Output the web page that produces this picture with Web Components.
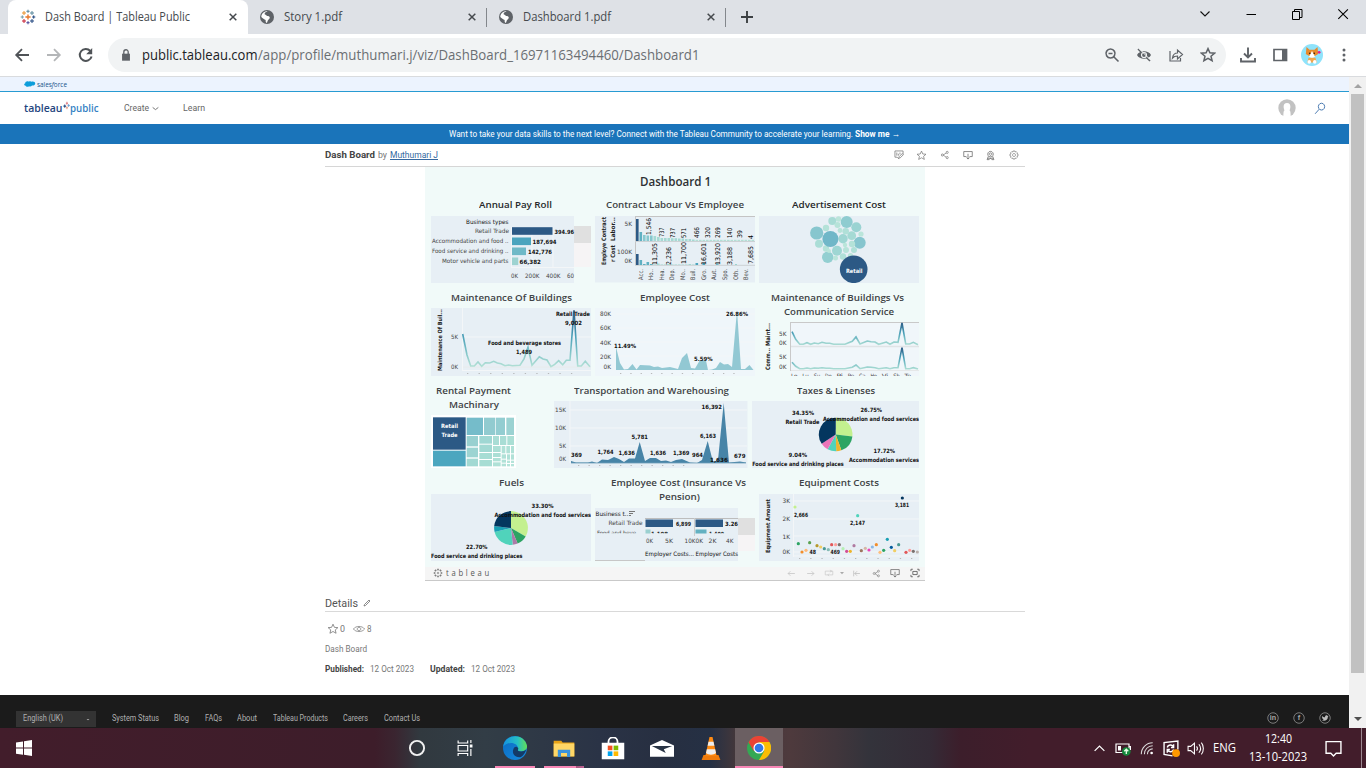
<!DOCTYPE html>
<html lang="en">
<head>
<meta charset="utf-8">
<title>Dash Board | Tableau Public</title>
<style>
html,body{margin:0;width:1366px;height:768px;overflow:hidden;background:#fff;font-family:"Open Sans","Noto Sans",sans-serif}
</style>
</head>
<body>
<desktop-screen></desktop-screen>
<script>
/* Text that is set to an exact width, whatever the font's own advance. */
class FitText extends HTMLElement{
  connectedCallback(){
    if(this.shadowRoot)return;
    const r=this.attachShadow({mode:'open'}),w=this.getAttribute('w');
    r.innerHTML=`<style>:host{display:inline-block;flex:none;width:${w}px;white-space:pre}span{display:inline-block;transform-origin:0 50%}</style><span><slot></slot></span>`;
    const s=r.querySelector('span'),n=s.offsetWidth;
    if(n)s.style.transform=`scaleX(${w/s.getBoundingClientRect().width})`;
  }
}
customElements.define('fit-text',FitText);

const S=(d,w=1.5,c='#5f6368')=>`<path d="${d}" fill="none" stroke="${c}" stroke-width="${w}"/>`;
const F=(d,c='#5f6368')=>`<path d="${d}" fill="${c}"/>`;
const star='M8 1.6l1.9 4.2 4.6.4-3.5 3 1.1 4.5L8 11.3l-4.1 2.4L5 9.2l-3.5-3 4.6-.4z';
const plus=(x,y,r,c,w=1)=>S(`M${x-r} ${y}h${2*r}M${x} ${y-r}v${2*r}`,w,c);
const share='M10.5 4.5L5 8l5.5 4';
const ICONS={
 tableau:plus(8,8,2.6,'#e8762b',1.4)+plus(8,2.3,1.6,'#59879b')+plus(8,13.7,1.6,'#4b4a9b')+plus(2.3,8,1.6,'#7199a6')+plus(13.7,8,1.6,'#1f457e')+plus(4,4,2,'#e8912b')+plus(12,4,2,'#59879b')+plus(4,12,2,'#c72035')+plus(12,12,2,'#1f447e'),
 mark:plus(4,9,3,'#1f457e',2)+plus(9,4,2.5,'#e0777d',2)+plus(13,8,2.5,'#6d9fd0',2)+plus(9,12,2.5,'#e8a08a',2),
 globe:'<circle cx="8" cy="8" r="7" fill="#5f6368"/>'+F('M8.6 2.1c-1 1.3-3.1 1.1-3 2.800 0 .9 1.900.6 1.900 1.700 0 .9 2.600.2 3.100 1.300.5.9-.3 2.300-1.300 2.900-.9.7-.7 2.100-1.400 3.100C6.500 13.500 6.500 12 6.700 11c-1.600-.4-2.900-1.700-4.400-3C2.500 5 4.500 2.600 8.600 2.100z','#fff'),
 close:S('M4.200 4.200l7.600 7.600M11.800 4.200l-7.600 7.600',1.7,'#45494d'),
 plus:S('M8 2v12M2 8h12',1.9,'#3c4043'),
 caret:S('M3.500 5.500L8 10l4.500-4.500',1.100,'#111'),
 min:S('M3.500 8.500h9.500',1,'#000'),
 restore:S('M3.500 5.500h7v8h-7zM5.500 5.500v-2h7.500v8h-2.500',1,'#000'),
 xwin:S('M3.300 3.300l9.600 9.600M12.900 3.300l-9.600 9.600',1.100,'#000'),
 back:S('M15 8H2.500M8 2.200L2.200 8 8 13.800',1.800,'#4f5357'),
 fwd:S('M1 8h12.500M8 2.200L13.800 8 8 13.800',1.800,'#b4b6b8'),
 reload:S('M13.600 9.500A6 6 0 1 1 12.300 3.900',2,'#4f5357')+F('M14.200 1v6.200H8.200z','#4f5357'),
 lock:F('M3.500 6.500h9v8h-9z')+S('M5.500 7V4.500a2.500 2.500 0 0 1 5 0V7',1.500),
 zoom:S('M6.500 2a4.500 4.500 0 1 0 .01 0M10 10l4.500 4.500M4.500 6.500h4',1.600),
 eyeoff:S('M2 2l12 12',1.600)+F('M1 8c2.500-5 11.500-5 14 0-2.500 5-11.500 5-14 0z')+'<circle cx="8" cy="8" r="2.500" fill="none" stroke="#f1f3f4" stroke-width="1.200"/>'+S('M3 1.500l11 11',1,'#f1f3f4'),
 share:S('M2 4v10h10.500V11M4.500 11C5 7.500 7 6 9.500 6V3l5 4.500-5 4.500V9C7.500 9 5.800 9.500 4.500 11z',1.200),
 star:S(star,1.500),
 download:S('M8 0.500v10M4 6.500l4 4 4-4M1 11v3.500h14V11',1.900,'#5f6368'),
 panel:S('M2 2.500h12.500v11H2z',1.700)+F('M10 2h5v12h-5z'),
 dots:'<g fill="#5f6368"><circle cx="8" cy="3" r="1.500"/><circle cx="8" cy="8" r="1.500"/><circle cx="8" cy="13" r="1.500"/></g>',
 corgi:'<circle cx="8" cy="8" r="8" fill="#8fe3fb"/>'+F('M4 2.200l2.200 2h3.600l2.200-2 .5 5L8 10 3.500 7.200z','#e88a2c')+F('M8 5l2.200 4.200L8 10.500 5.800 9.200z','#fff')+F('M5.500 10h5l1 3.500h-7z','#f2a64d')+'<circle cx="6" cy="13" r="1.300" fill="#fff"/><circle cx="10" cy="13" r="1.300" fill="#fff"/><circle cx="6.400" cy="6.700" r=".5"/><circle cx="9.600" cy="6.700" r=".5"/><circle cx="13.200" cy="6" r="1" fill="#e91e8c"/>',
 cloud:F('M6.500 3.200C7.500 2 9.300 2.200 10 3.300c2.500-1.300 5 .500 5 3.200 0 2.600-2 4.200-4.300 3.800-.8 1.700-2.700 2.200-4 1.300-1.300 1.800-4 1.300-4.500-.7C-.500 10.500-.200 7 1.700 6.200 1.300 3 4.500 1.200 6.500 3.200z','#0d9dda'),
 avatar:'<circle cx="8" cy="8" r="7.700" fill="#c2c2c2"/>'+F('M8 3.500c3 0 3.500 3 2.600 5.500-.5 1.200-.2 1.800.4 2.200l.5 5.800h-7l.5-5.800c.6-.4.9-1 .4-2.200C4.500 6.500 5 3.500 8 3.500z','#fff'),
 search:S('M10 1.500a4.200 4.200 0 1 0 .01 0M7 8.800l-5.500 5.700',1.200,'#4173ad'),
 note:S('M14.500 7V1.500h-13v10H5l3 3M4.500 4v5M7 6v3M9.500 4v3M15 7.500l-5 5-2.500.7.700-2.500 5-5z',1.200,'#757575'),
 star2:S(star,1.050,'#757575'),
 sharenet:S(share,1,'#666')+'<g fill="#fff" stroke="#666"><circle cx="11.500" cy="3.800" r="1.700"/><circle cx="3.800" cy="8" r="1.700"/><circle cx="11.500" cy="12.200" r="1.700"/></g>',
 dl:S('M5.500 10.500H1.200V2.500h13.600v8h-4.300M8 6v8.500M5.500 12L8 14.500l2.500-2.500',1.200,'#666'),
 badge:S('M8 2a4 4 0 1 0 .01 0M8 4.200a1.800 1.800 0 1 0 .01 0M5 9l-2 5h3l2-2 2 2h3l-2-5M4 12h8',1.200,'#757575'),
 gear:S('M6.700 1.500h2.600l.5 1.700 1.800-.6 1.800 1.800-.6 1.800 1.700.5v2.600l-1.700.5.6 1.800-1.800 1.800-1.800-.6-.5 1.700H6.700l-.5-1.700-1.800.6-1.800-1.800.6-1.800-1.700-.5V6.700l1.700-.5-.6-1.800 1.800-1.800 1.800.6zM8 5.600a2.400 2.400 0 1 0 .01 0',1.100,'#757575'),
 spark:[[8,8],[8,2.500],[8,13.500],[2.500,8],[13.500,8],[4,4],[12,4],[4,12],[12,12]].map(([x,y])=>plus(x,y,1.800,'#6a6a6a',1)).join(''),
 left:S('M14 8H2M6 4L2 8l4 4',1.200,'#bdbdbd'),right:S('M2 8h12M10 4l4 4-4 4',1.200,'#bdbdbd'),
 loop:S('M6 11H2V5h10M10 3l2 2-2 2M10 5h4v6H6M8 9l-2 2 2 2',1,'#c4c4c4'),
 tri:F('M4 6h8l-4 4.500z','#aaa'),
 first:S('M3 3v10M14 8H5M9 4L5 8l4 4',1.200,'#b4b4b4'),
 full:S('M1.500 5V2h3M11.500 2h3v3M14.500 11v3h-3M4.500 14h-3v-3M4.500 5.500h7v5h-7z',1.300,'#555'),
 pencil:S('M2 14l1-3L12 2l2 2-9 9z',1.500,'#666'),
 eye:S('M.5 8C4 2.500 12 2.500 15.500 8 12 13.500 4 13.500.5 8zM8 5.500a2.500 2.500 0 1 0 .01 0',1.200,'#888'),
 chev:S('M1.500 5.500l6.500 5 6.500-5',2,'#666'),
 win:F('M0 2.400L7 1.400v6.200H0zM8 1.200L16 0v7.600H8zM0 8.500h7v6.200l-7-1zM8 8.500h8V16l-8-1.200z','#fff'),
 ring:'<circle cx="8" cy="8" r="6.300" fill="none" stroke="#f1f1f1" stroke-width="1.700"/>',
 task:S('M2 .5v2.500h9V.5M2 5.500h9v5.500H2zM2 16v-2.500h9V16M14 0v3M14 9v7',1.100,'#fff')+F('M13 4.500h2.500v3H13z','#fff'),
 edge:'<defs><linearGradient id="g1"><stop stop-color="#1692e0"/><stop offset=".6" stop-color="#26bfc4"/><stop offset="1" stop-color="#62df57"/></linearGradient><linearGradient id="g2" y2="1"><stop stop-color="#0b6ac0"/><stop offset="1" stop-color="#168be0"/></linearGradient></defs><circle cx="8" cy="8" r="8" fill="url(#g2)"/><path d="M.2 7C1-1.500 14-2.500 16 6.500c.3 3-2.500 4-5 3.700-1.400-.2-1.200-1-.8-1.700C10 4.500 4 3 .2 7z" fill="url(#g1)"/><path d="M10.200 8.500c-.4.700-.6 1.500.8 1.700 1.700.2 3.500-.1 4.500-1.400-.5 2-1.600 4-3.500 5.200-3.500.8-6.500-2-5-5.500.5-1.600 2.500-2 3.200 0z" fill="#143a67"/>',
 folder:F('M.5 2h5.500l1 1.500h8.500V14H.5z','#e8a317')+F('M.5 4.200h15V14H.5z','#ffd766')+F('M3.500 9h9v5.500h-2.300v-3H5.800v3H3.500z','#3b94dc'),
 store:F('M.5 4h15v11.500H.5z','#fff')+S('M5 5V3.200a3 3 0 0 1 6 0V5',1.200,'#fff')+F('M4.500 6h3.100v3.200H4.500z','#f25022')+F('M8.400 6h3.100v3.200H8.400z','#7fba00')+F('M4.500 10h3.100v3.200H4.500z','#00a4ef')+F('M8.400 10h3.100v3.200H8.400z','#ffb900'),
 mail:F('M0 6l8-4.500L16 6v9H0z','#fff')+F('M1.200 6.300h13.600L9.200 9l1.300 3z','#293445'),
 vlc:F('M2 12.500h12l1.500 3.500H.5z','#f07b0a')+F('M6.800 0h2.400l3.300 13H3.500z','#ff8b13')+F('M6 3.300h4l.7 2.700H5.300zM4.700 8.500h6.600l.7 2.700c-2 1.500-6 1.500-8 0z','#eee'),
 chrome:'<circle cx="8" cy="8" r="8" fill="#34a853"/>'+F('M1 4.200A8 8 0 0 1 15 4H8L4.500 10z','#ea4335')+F('M15 4H8l3.500 6L8 16A8 8 0 0 0 15 4z','#fbbc04')+'<circle cx="8" cy="8" r="3.700" fill="#fff"/><circle cx="8" cy="8" r="2.900" fill="#3378e8"/>',
 up:S('M2 11l6-6 6 6',1.500,'#fff'),
 batt:S('M1 4h13v8.500H1zM14 6.500h1.500V10',1.200,'#fff')+F('M3 6h3v4.500H3z','#fff')+'<circle cx="11.300" cy="11.500" r="4.300" fill="#15883c"/>'+S('M11.300 9v5M9.300 11.200l2-2 2 2',1.300,'#e8ffe8'),
 wifi:S('M1.500 15A13 13 0 0 1 14.500 2M5 15A9.500 9.500 0 0 1 14.500 5.500M8.500 15A6 6 0 0 1 14.500 9',1.200,'#ddd')+'<circle cx="13.300" cy="13.700" r="1.500" fill="#fff"/>',
 sync:S('M14 9V1L1 2.500v11L9 15M4 7c1-3 5-3 6 0M10 4v3H7.500M10 9c-1 3-5 2.500-6 0M4 12V9h2.500',1.300,'#fff')+'<circle cx="12.300" cy="12.300" r="3.700" fill="#ff9800"/>',
 vol:S('M1 6h2.500L7 3v10l-3.500-3H1zM9 6c1 1.200 1 2.800 0 4M11.200 4c2 2.500 2 5.500 0 8M13.500 2.500c2.500 3 2.500 8 0 11',1,'#fff'),
 action:S('M1 1.500h14v11H10.500L8 15l-2.500-2.500H1z',1.300,'#fff')
};
for(const [k,c] of [['li','in'],['fb','f']])ICONS[k]=`<circle cx="8" cy="8" r="7" fill="none" stroke="#999"/><text x="8" y="11.300" text-anchor="middle" font-family="Liberation Sans" font-weight="700" font-size="9.500" fill="#aaa">${c}</text>`;
ICONS.tw='<circle cx="8" cy="8" r="7" fill="none" stroke="#999"/>'+F('M4 5.200c1 1.200 2.500 1.700 4 1.800 0-3 3-3 3.600-1.700l1.200-.3-.9 1.300c0 5-5 6.300-8.200 4.500 1 0 2-.2 2.500-.8C4.500 9.500 4 7.500 4 5.200z','#bbb');

class UiIcon extends HTMLElement{
  connectedCallback(){
    if(this.shadowRoot)return;
    const s=this.getAttribute('s')||16,h=this.getAttribute('h')||s,c=this.getAttribute('cell')||s;
    this.attachShadow({mode:'open'}).innerHTML=`<style>:host{display:inline-flex;flex:none;width:${c}px;align-items:center;justify-content:center}svg{display:block;flex:none}</style><svg width="${s}" height="${h}" viewBox="0 0 16 16" preserveAspectRatio="none">${ICONS[this.getAttribute('n')]}</svg>`;
  }
}
customElements.define('ui-icon',UiIcon);

/* Chart helpers. Charts are drawn in the coordinate system of the screen. */
const INK='#222',GR='#444';
const T=(x,cy,t,w,o={})=>{const f=o.f||6;return `<text x="${x}" y="${cy+f*.36}" font-size="${f}" textLength="${w}" lengthAdjust="spacingAndGlyphs" fill="${o.c||GR}" ${o.b?'font-weight="700"':''}>${t}</text>`};
const B=(x,cy,t,w,o={})=>T(x,cy,t,w,{b:1,c:'#111',f:5.8,...o});
const V=(cx,y,t,w,o={})=>`<g transform="translate(${cx} ${y}) rotate(-90)">${T(0,0,t,w,{c:INK,f:6.5,...o})}</g>`;
const R=(x,y,w,h,c)=>`<rect x="${x}" y="${y}" width="${w}" height="${h}" fill="${c}"/>`;
const L=(x1,y1,x2,y2,c='#f3f6f8',w=1)=>`<path d="M${x1} ${y1}L${x2} ${y2}" stroke="${c}" stroke-width="${w}"/>`;
const C=(x,y,r,c)=>`<circle cx="${x}" cy="${y}" r="${r}" fill="${c}"/>`;
const ticks=(x,n,st,y)=>Array.from({length:n},(_,i)=>R(x+i*st,y,1.300,.8,'#aaa')).join('');
const P='#e7eff5',N='#2c5985';
const pts=(a,ox,oy)=>a.map(([x,y])=>`${(x/3+ox).toFixed(1)},${(y/3+oy).toFixed(1)}`).join(' ');
const grad=(id,y1,y2)=>`<defs><linearGradient id="${id}" gradientUnits="userSpaceOnUse" x1="0" x2="0" y1="${y1}" y2="${y2}"><stop stop-color="#2a5783"/><stop offset=".45" stop-color="#4a9fb8"/><stop offset=".8" stop-color="#8ccbcb"/><stop offset="1" stop-color="#b2e0d5"/></linearGradient></defs>`;
const pie=(cx,cy,r,parts)=>{let a=-Math.PI/2,s='';for(const[p,c]of parts){const b=a+p*2*Math.PI;s+=`<path d="M${cx} ${cy}L${cx+r*Math.cos(a)} ${cy+r*Math.sin(a)}A${r} ${r} 0 ${p>.5?1:0} 1 ${cx+r*Math.cos(b)} ${cy+r*Math.sin(b)}z" fill="${c}"/>`;a=b}return s};

const CHARTS={
payroll:[431,216,160,67,()=>R(431,216,143,67,P)+R(574,226,17,17,'#e0e0e0')+R(574,243,17,24,'#f6f4f5')+
 L(511.500,227,511.500,268)+L(532,227,532,268)+L(553,227,553,268)+L(511,267.500,574,267.500)+
 T(466,222,'Business types',42.500,{c:'#111'})+T(475,231.300,'Retail Trade',34)+T(432,241.300,'Accommodation and food ..',76.500)+T(432,251.300,'Food service and drinking ..',76.500)+T(442,261.300,'Motor vehicle and parts',66.500)+
 R(512,227.200,40.500,7.600,N)+R(512,237.500,19,7.600,'#4aa4be')+R(512,247.500,14,7.600,'#6fb9c7')+R(512,257.500,6.200,7.600,'#9dd3d1')+
 B(554.500,232,'394.96',19.500)+B(532.500,242,'187,694',24)+B(528,252,'142,776',24)+B(519.500,262,'66,382',21.500)+
 T(511,276,'0K',7)+T(525,276,'200K',14.500)+T(546,276,'400K',14.500)+T(567,276,'60',7)],
contract:[595,216,160,67,()=>{let s=R(595,216,160,66.500,P)+L(635,216.500,755,216.500,'#c4c4c4')+L(635.500,216,635.500,265,'#c4c4c4')+L(635,241.500,755,241.500,'#ccd1d4')+L(635,265.300,755,265.300,'#ccd1d4');
 const a=[22,9,6,5.500,5.500,5,4,3,3,3,2.800,2.800,2.500,2.500,2,2,1.500],b=[11,5,1,3,1,.5,1.500,.5,.5,1,.5,.5,.5,.5,.5,1,.5];
 a.forEach((h,i)=>{s+=R(636+i*3.500,241-h,2.600,h,i?i<2?'#5fb0c2':i<5?'#86c8cf':'#a5d9d3':N)});
 for(let i=17;i<34;i++)s+=R(636+i*3.500,239.800,2.600,1.200,'#b2dfd5');
 b.forEach((h,i)=>{s+=R(636+i*3.500,265-h,2.600,h,i?i<5?'#5fb0c2':'#a5d9d3':N)});
 s+=R(695.500,263,2.600,2,'#4aa4be')+R(702.500,263,2.600,2,'#4aa4be')+R(716,263.500,2.600,1.500,'#6fb9c7')+R(735,264,2,1,'#9dd3d1');
 s+=V(604,241,'Contract',24,{f:6,b:1})+V(613,241,'Labor...',24,{f:6,b:1})+V(604,265,'Employe',22,{f:6,b:1})+V(613,262,'r Cost',17,{f:6,b:1});
 s+=T(624.500,224.300,'5K',7.500)+T(617,252.300,'100K',15)+T(624.500,261.300,'0K',7.500);
 for(const[x,t,w,y]of[[648.500,'1,546',17,235],[661.500,'737',9.500,237],[673,'737',10,238],[683.300,'571',10,238],[697,'466',11,238],[708,'320',11,238],[718,'269',11,238],[729.500,'140',10,238],[740,'39',8,238],[751,'4',4,239],[655,'11,305',22,265],[668.500,'2,236',18,265],[683.300,'11,700',22,264],[704,'16,601',22,265],[718,'13,920',22,265],[729.500,'3,188',18,265],[751,'7,685',18,264]])s+=V(x,y,t,w,{f:6.500,c:'#000'});
 ['Acc.','Ho..','Hea.','Dep.','Mo..','Buil.','Gro.','Aut.','Spo.','Oth.','Bev.'].forEach((t,i)=>s+=V(640.300+i*10.550,280,t,11,{f:6.300,c:'#444'}));return s}],
bubble:[759,216,160,67,()=>R(759,216,160,67,P)+[[816.700,233,6.600,'#87c6ce'],[846.700,222,6,'#8fccd0'],[856.300,227.300,5,'#9ad3d2'],[859.700,242.700,6,'#86c5ce'],[827.700,257.300,5.700,'#93cfd1'],[837,250.700,5,'#9ed6d3'],[843,238.700,4.700,'#9fd6d3'],[832.300,221,4,'#a8dbd5'],[851.700,235.700,4.400,'#a5dad4'],[819,243.700,4,'#aaddd6'],[845.700,231.300,3.300,'#b0e0d8'],[826,228,3.200,'#b4e2d8'],[838.500,219,2.700,'#bae5da'],[837.500,225,3,'#b7e3d9'],[861,234,2.600,'#bae5da'],[852,244,3.200,'#b4e2d8'],[854,250,3,'#b0e0d8'],[826,248.500,3.200,'#b4e2d8'],[846,250,3,'#b7e3d9'],[843,256.500,3.200,'#b0e0d8'],[835.500,258,2.500,'#bae5da'],[850.500,255.500,2.600,'#bae5da'],[840,230.500,2.400,'#b7e3d9'],[845,245,2.200,'#bae5da'],[829,251,2,'#bae5da']].map(a=>C(...a)).join('')+C(830.400,239,8,'#70b7c8')+C(853.700,269.300,13.800,N)+B(846,271,'Retail',16.500,{c:'#fff'})],
buildings:[431,308,160,68,()=>R(431,308,160,68,P)+grad('ga',310,367)+L(462.500,308,462.500,371)+L(463,337,591,337)+L(463,367,591,367,'#e8ebec')+L(463,370.500,591,370.500)+V(440,371,'Maintenance Of Buil...',62,{f:5.800,b:1})+T(451,337.300,'5K',7)+T(451,367,'0K',7)+
 `<polyline fill="none" stroke="url(#ga)" stroke-width="1.600" points="${pts([[113,147],[126,210],[137,243],[148,243],[159,231],[170,244],[181,233],[194,234],[206,229],[217,234],[228,236],[240,242],[251,240],[262,242],[285,241],[297,222],[309,187],[321,241],[343,215],[354,222],[366,225],[378,245],[389,238],[401,227],[413,239],[424,226],[435,226],[447,76],[458,243],[469,243],[481,229],[495,245]],425,285)}"/>`+ticks(467,10,11.550,373)+
 B(556,314,'Retail Trade',34)+B(565,323.300,'9,002',17)+B(488,343,'Food and beverage stores',73)+B(516,352,'1,489',16)],
employee:[595,308,160,68,()=>R(595,308,160,68,'#eff6fa')+L(616,314,755,314)+L(616,328,755,328)+L(616,342,755,342)+L(616,356,755,356)+T(600,314,'80K',11)+T(600,328.300,'60K',11)+T(600,342.500,'40K',11)+T(600,357,'20K',11)+T(603.500,367,'0K',7.500)+
 `<polygon fill="#92c8d3" points="616,370 616,347 620,363 624,369.500 628,369 632.500,364 636.500,369.500 640,365 650,365.500 654,367 658,366.500 662,368 670,367 678,369 682,358 687,353 691,368 695,368.500 700,360 706,360.500 708,370 712,369.500 716,368 720,362 724,364.500 728,364 732,367 737,310 741,369 745,369 749.500,365 753.500,370"/>`+ticks(620,12,10.300,373)+
 B(614,346,'11.49%',22)+B(694,359,'5.59%',18.500)+B(726,314,'26.86%',22)],
compare:[759,322,160,54,()=>{const p=[[351,140],[362,163],[374,178],[385,178],[396,173],[407,178],[418,174],[430,176],[441,172],[453,175],[464,175],[476,178],[510,178],[532,169],[543,156],[555,177],[577,168],[588,170],[600,171],[611,178],[634,171],[645,178],[657,171],[669,172],[681,114],[692,177],[704,177],[715,172],[729,179]];const q=p.map(([x,y])=>[x,y===114?188:Math.round(251-(178-y)*.5)]);
 return R(790,322,129,54,'#f0f6fa')+grad('gb',322,346)+grad('gc',347,370)+L(790,322.500,919,322.500,'#c9c9c9')+L(790.500,322,790.500,371,'#c9c9c9')+L(791,346.500,919,346.500,'#e0e4e6',1.500)+L(791,370.500,919,370.500,'#e5e7e8')+V(768,346,'Maint...',23,{f:6,b:1})+V(768,370,'Comm...',22,{f:6,b:1})+T(779,334,'5K',7.500)+T(779,342.500,'0K',7.500)+T(779,356.500,'5K',7.500)+T(779,366.500,'0K',7.500)+
 `<polyline fill="none" stroke="url(#gb)" stroke-width="1.600" points="${pts(p,675,285)}"/><polyline fill="none" stroke="url(#gc)" stroke-width="1.600" points="${pts(q,675,285)}"/>`+['Lo','Lu','Su','Do','Pi','Pe','Ca','Ho','Vi','Sh','Te'].map((t,i)=>T(791+i*11.350,376,t,6.500)).join('')}],
rental:[431,415,85,53,()=>{let s=R(431,415,85,53,'#fff');const a=[[24,106,98,97,N],[24,206,98,47,'#4ca6bf'],[125,107,49,52,'#75bcca'],[177,107,33,52,'#91cbd0'],[212,107,28,52,'#93cdd1'],[244,107,23,52,'#9bd2d2'],[125,162,34,31,'#98d0d0'],[125,197,34,29,'#9cd4d2'],[125,230,34,23,'#a2d9d3'],[163,162,38,23,'#9fd7d3'],[163,188,38,22,'#a2d9d3'],[163,213,38,18,'#a7ddd4'],[163,234,38,19,'#a7ddd4'],[204,162,18,27,'#a9ddd5'],[225,162,19,27,'#a9ddd5'],[247,162,20,27,'#abdfd5'],[204,192,23,18,'#abdfd5'],[204,213,23,12,'#abdfd5'],[204,228,23,10,'#b0e1d7'],[204,241,23,12,'#b0e1d7'],[230,192,11,22,'#b0e1d7'],[244,192,11,22,'#b0e1d7'],[258,192,9,22,'#b0e1d7'],[230,217,13,13,'#b0e1d7'],[230,233,13,9,'#b0e1d7'],[230,245,13,8,'#b0e1d7'],[246,217,9,16,'#b0e1d7'],[258,217,9,16,'#b0e1d7'],[246,236,9,7,'#b5e4da'],[246,246,9,7,'#b5e4da'],[258,236,9,7,'#b5e4da'],[258,246,9,7,'#b5e4da']];
 for(const[x,y,w,h,c]of a)s+=R(x/3+425,y/3+382,w/3,h/3,c);return s+B(441,426,'Retail',17,{c:'#fff'})+B(441.500,435,'Trade',16,{c:'#fff'})}],
transport:[554,401,194,67,()=>R(554,401,193.500,67,P)+L(570,401,570,463)+L(570,410,747,410)+L(570,428,747,428)+L(570,446,747,446)+T(555,410,'15K',11)+T(555,428,'10K',11)+T(559,446,'5K',7)+T(559,459,'0K',7)+
 `<polygon fill="#4784a7" points="571,463 571,461 576,462.500 588,462.500 592,461.500 597,463 602,459.500 608,460 614,457 619,459 624,462 629,458.500 635,458.500 639.700,442 645,461 650,458 656,458 661,461 666,460.500 671,462 676,460 682,459 690,462.500 697,463 702,460 707.700,441 713,462 718,460 723.700,403 729,462.500 740,461.500 746,462.500 746,463"/>`+L(571,463,746,463,'#6f9fb9',.8)+ticks(578,11,10.500,465)+
 [[571,455,'369',11],[597.500,452,'1,764',16],[618.500,453,'1,636',16.500],[631.500,436.500,'5,781',16.500],[650,453,'1,636',16],[673,453,'1,369',16.500],[692,455,'964',11],[700,435.500,'6,163',16],[701.500,407,'16,392',20.500],[710,460,'1,636',18],[734,456,'679',11.500]].map(a=>B(...a)).join('')],
taxes:[752,401,167,67,()=>R(752,401,167,67,P)+pie(835.700,434.500,16.800,[[.2679,'#c3f08f'],[.1772,'#2ca463'],[.050,'#eeb52d'],[.085,'#50d3bb'],[.077,'#ea75b9'],[.3435,'#04365f']])+B(792,413,'34.35%',22)+B(785.500,422,'Retail Trade',34)+B(860.500,410,'26.75%',21.500)+B(823,419,'Accommodation and food services',96)+B(788.500,455,'9.04%',18.500)+B(752.200,464,'Food service and drinking places',91.500)+B(873.500,451,'17.72%',21.500)+B(849,460,'Accommodation services',70)],
fuels:[431,494,160,67,()=>R(431,494,160,67,P)+pie(511,528,16.900,[[.333,'#c3f08f'],[.103,'#2ca463'],[.048,'#ac7aa7'],[.227,'#50d3bb'],[.058,'#189fb4'],[.231,'#04365f']])+B(531.500,506,'33.30%',22)+B(494.500,515,'Accommodation and food services',96.500)+B(466,547,'22.70%',21.500)+B(431,556,'Food service and drinking places',91.500)],
insurance:[595,508,160,53,()=>R(595,508,143,53,P)+R(738,518,17,17,'#e0e0e0')+R(738,535,17,16,'#f6f4f5')+L(645,518.500,738,518.500,'#bdbdbd')+T(595.500,513.500,'Business t..',33,{c:'#111'})+L(629,511.500,635,511.500,'#777')+L(629,513.500,633,513.500,'#777')+L(629,515.500,631,515.500,'#777')+L(595,560.500,645,560.500,'#c7c7c7')+
 T(608.500,523,'Retail Trade',34)+`<svg x="595" y="529" width="143" height="4.300" viewBox="595 529 143 4.300">${T(597,533,'Food and beve...',44)}${B(651,534,'1,108',17)}${B(709,534,'1,400',15)}</svg>`+R(645.500,519.500,27.500,7.500,N)+R(645.500,529.500,5,4,'#9bd0d0')+R(695.500,519.500,27.500,7.500,N)+R(695.500,529.500,11,4,'#63b1c1')+L(694.500,518,694.500,536,'#ccc')+B(676,524,'6,899',15)+B(725,524,'3.26',13)+
 T(646,541,'0K',7)+T(665,541,'5K',8)+T(684.500,541,'10K',11)+T(695.500,541,'0K',7.500)+T(708.500,541,'2K',8)+T(726,541,'4K',7.500)+T(645,554,'Employer Costs...',49,{c:'#111'})+T(695.500,554,'Employer Costs',42.500,{c:'#111'})],
equipment:[759,494,160,67,()=>R(759,494,160,67,P)+L(793.500,494,793.500,557)+L(794,501,919,501)+L(794,519,919,519)+L(794,536,919,536)+L(794,552,919,552)+L(794,556,919,556)+V(768,553,'Equipment Amount',54,{f:5.800,b:1})+T(782.500,501,'3K',7.500)+T(782.500,519,'2K',7.500)+T(782.500,536.500,'1K',7.500)+T(782.500,552,'0K',7.500)+ticks(799,11,11.200,558)+
 [[360,99,'#c3f08f'],[548,125,'#50d3bb'],[682,72,'#04365f'],[370,209,'#2ca463'],[381,234,'#f28e2b'],[393,229,'#ffb877'],[404,206,'#59a14f'],[426,215,'#b6992d'],[437,219,'#f1ce63'],[448,224,'#499894'],[460,227,'#86bcb6'],[470,212,'#e15759'],[482,212,'#ff9d9a'],[493,212,'#79706e'],[504,224,'#b5efb5'],[515,232,'#d34c95'],[526,232,'#edb52d'],[537,215,'#b07aa1'],[559,230,'#9d7660'],[571,223,'#d7b5a6'],[582,228,'#ea45b9'],[592,219,'#8ab8e6'],[604,212,'#f28e2b'],[615,235,'#ffbe7d'],[626,229,'#2ca463'],[637,196,'#189fb4'],[649,220,'#005a9c'],[659,230,'#f1ce63'],[671,212,'#499894'],[693,235,'#e15759'],[704,229,'#ff9d9a'],[715,232,'#79706e'],[727,234,'#bab0ac']].map(([x,y,c])=>C(x/3+675,y/3+474,1.600,c)).join('')+
 B(794,514.500,'2,666',14)+B(850,523,'2,147',15)+B(895,505,'3,181',14)+B(809.500,552,'48',6.500)+B(830.500,552,'469',9.500)]
};
class VizSheet extends HTMLElement{
  connectedCallback(){
    if(this.shadowRoot)return;
    const[x,y,w,h,f]=CHARTS[this.getAttribute('kind')];
    this.attachShadow({mode:'open'}).innerHTML=`<style>:host{display:flex;flex-direction:column;justify-content:space-between;flex:none;width:${w}px}header{display:flex;flex-direction:column;align-items:center;font:600 9.500px/14px "Open Sans",sans-serif;color:#3e4245}svg{display:block}text{font-family:"DejaVu Sans",sans-serif}</style><header><slot></slot></header><svg width="${w}" height="${h}" viewBox="${x} ${y} ${w} ${h}">${f()}</svg>`;
  }
}
customElements.define('viz-sheet',VizSheet);

const define=(name,css,html)=>customElements.define(name,class extends HTMLElement{
  connectedCallback(){if(this.shadowRoot)return;this.attachShadow({mode:'open'}).innerHTML=`<style>*{box-sizing:border-box}${css}</style>${html}`}
});

define('browser-tab',':host{display:flex;align-items:center;width:239px;height:34px;padding:0 8px 0 11px;font-size:12px;color:#45494d;box-sizing:border-box}slot[name=i]{display:flex}.t{margin-left:9px;flex:1;padding-bottom:1px}:host([active]){width:240px;padding-left:12px;background:#fff;border-radius:8px 8px 0 0}:host([sep]){background:linear-gradient(#83878c,#83878c) 100% 8px/1px 19px no-repeat}',
 '<slot name="i"></slot><div class="t"><slot></slot></div><ui-icon n="close" s="14" h="14"></ui-icon>');

define('browser-chrome',':host{display:block;height:77px;border-bottom:1px solid #d9dbde;background:#fff;box-sizing:border-box}.tabs{display:flex;height:34px;background:#dee1e6;padding-left:8px;align-items:center}.win{display:flex;margin-left:auto;height:28px;margin-bottom:6px}.bar{display:flex;height:42px;padding-left:6px;align-items:center}.omni{display:flex;align-items:center;width:1118px;height:34px;border-radius:17px;background:#f1f3f4;margin:0 6px;padding:0 2px 0 10px;font-size:14px;color:#202124}.omni .u{display:flex;margin:0 auto 0 8px;padding-bottom:2px}.g{color:#6b6f73}',
 `<div class="tabs"><browser-tab active><ui-icon slot="i" n="tableau"></ui-icon><fit-text w="145">Dash Board | Tableau Public</fit-text></browser-tab><browser-tab sep><ui-icon slot="i" n="globe"></ui-icon><fit-text w="58">Story 1.pdf</fit-text></browser-tab><browser-tab sep><ui-icon slot="i" n="globe"></ui-icon><fit-text w="88">Dashboard 1.pdf</fit-text></browser-tab><ui-icon n="plus" cell="42"></ui-icon><div class="win"><ui-icon n="caret" cell="46"></ui-icon><ui-icon n="min" cell="46"></ui-icon><ui-icon n="restore" cell="46"></ui-icon><ui-icon n="xwin" cell="46"></ui-icon></div></div>
 <div class="bar"><ui-icon n="back" cell="32"></ui-icon><ui-icon n="fwd" cell="32"></ui-icon><ui-icon n="reload" cell="32"></ui-icon><div class="omni"><ui-icon n="lock" s="14" cell="16"></ui-icon><div class="u"><fit-text w="115.500">public.tableau.com</fit-text><fit-text class="g" w="441.500">/app/profile/muthumari.j/viz/DashBoard_16971163494460/Dashboard1</fit-text></div><ui-icon n="zoom" cell="32"></ui-icon><ui-icon n="eyeoff" cell="32"></ui-icon><ui-icon n="share" cell="32"></ui-icon><ui-icon n="star" cell="32"></ui-icon></div><ui-icon n="download" cell="32"></ui-icon><ui-icon n="panel" cell="32"></ui-icon><ui-icon n="corgi" s="22" cell="32"></ui-icon><ui-icon n="dots" cell="32"></ui-icon></div>`);

define('site-header',':host{display:block;height:67px;font-family:Roboto,sans-serif}.sf{height:15px;background:#ecf3fe;border-bottom:1px solid #289bd2;display:flex;align-items:center;padding-left:24px;font:500 7.500px/10px "Open Sans";color:#17538c}.sf fit-text{margin:0 0 1px 1px}.nav{height:32px;display:flex;align-items:center;padding:0 21px 0 24px;font-size:8.500px;color:#666}.logo{display:flex;align-items:center;font:600 11px/14px "Open Sans";color:#1f457e;margin-right:26px;padding-bottom:1px}.logo ui-icon{margin-bottom:4px}.logo .p{color:#3482c4}.r{margin-left:auto;display:flex;align-items:center;gap:16px}.ban{height:20px;background:#1a74ba;color:#fff;font-size:9px;line-height:20px;display:flex;padding-left:449px}b{font-weight:700}',
 `<div class="sf"><ui-icon n="cloud" s="12" h="8.500"></ui-icon><fit-text w="30">sales<i>f</i>orce</fit-text></div><div class="nav"><div class="logo"><fit-text w="38.500">tableau</fit-text><ui-icon n="mark" s="7" h="9"></ui-icon><fit-text class="p" w="28.500">public</fit-text></div><fit-text w="25">Create</fit-text><ui-icon n="chev" s="7" cell="12"></ui-icon><fit-text w="22" style="margin-left:22px">Learn</fit-text><div class="r"><ui-icon n="avatar" s="18"></ui-icon><ui-icon n="search" s="12" h="13" cell="16"></ui-icon></div></div><div class="ban"><fit-text w="404">Want to take your data skills to the next level? Connect with the Tableau Community to accelerate your learning.</fit-text><fit-text w="45" style="margin-left:2px"><b>Show me →</b></fit-text></div>`);

define('viz-dashboard',':host{display:block;width:500px;height:414px;background:#f1faf9;margin-left:100px}h1{margin:0;height:30px;display:flex;justify-content:center;font:600 12px/30px "Open Sans",sans-serif;color:#2e3133}.row{display:flex;justify-content:space-between;padding:0 6px;margin-bottom:8px;height:84px}.a{height:86px;margin-bottom:7px}.b{height:86px}.a fit-text,.b fit-text{position:relative;top:1px}.d{height:85px;margin-bottom:6px}.sp{gap:4px}.sp > :first-child{margin-right:auto}.tb{height:14px;background:#f5f5f5;border-bottom:1px solid #c9c9c9;display:flex;align-items:center;padding:0 0 0 8px;font:9px/12px "Open Sans";color:#555}.tb span{letter-spacing:3.200px;margin:0 auto 2px 3px}.tb ui-icon{margin-bottom:1px}',
 `<h1><fit-text w="71">Dashboard 1</fit-text></h1>
 <div class="row a"><viz-sheet kind="payroll"><fit-text w="73" style="margin-left:8px;color:#26282a">Annual Pay Roll</fit-text></viz-sheet><viz-sheet kind="contract"><fit-text w="138">Contract Labour Vs Employee</fit-text></viz-sheet><viz-sheet kind="bubble"><fit-text w="94" style="color:#26282a">Advertisement Cost</fit-text></viz-sheet></div>
 <div class="row b"><viz-sheet kind="buildings"><fit-text w="121">Maintenance Of Buildings</fit-text></viz-sheet><viz-sheet kind="employee"><fit-text w="70">Employee Cost</fit-text></viz-sheet><viz-sheet kind="compare"><fit-text w="133" style="margin-right:3px">Maintenance of Buildings Vs</fit-text><fit-text w="110">Communication Service</fit-text></viz-sheet></div>
 <div class="row sp"><viz-sheet kind="rental"><fit-text w="75">Rental Payment</fit-text><fit-text w="50">Machinary</fit-text></viz-sheet><viz-sheet kind="transport"><fit-text w="155">Transportation and Warehousing</fit-text></viz-sheet><viz-sheet kind="taxes"><fit-text w="78">Taxes &amp; Linenses</fit-text></viz-sheet></div>
 <div class="row d"><viz-sheet kind="fuels"><fit-text w="25">Fuels</fit-text></viz-sheet><viz-sheet kind="insurance"><fit-text w="135" style="margin-left:6px">Employee Cost (Insurance Vs</fit-text><fit-text w="41" style="margin-left:8px">Pension)</fit-text></viz-sheet><viz-sheet kind="equipment"><fit-text w="80">Equipment Costs</fit-text></viz-sheet></div>
 <div class="tb"><ui-icon n="spark" s="10"></ui-icon><span><fit-text w="46">tableau</fit-text></span><ui-icon n="left" s="9" cell="20"></ui-icon><ui-icon n="right" s="9" cell="19"></ui-icon><ui-icon n="loop" s="10" cell="17"></ui-icon><ui-icon n="tri" s="8" cell="9"></ui-icon><ui-icon n="first" s="9" cell="21"></ui-icon><ui-icon n="sharenet" s="9" cell="18"></ui-icon><ui-icon n="dl" s="10" cell="20"></ui-icon><ui-icon n="full" s="10" cell="20"></ui-icon></div>`);

define('viz-page',':host{display:block;height:551px;padding-left:325px;font-family:Roboto,sans-serif;font-size:9px;color:#777}.head{width:700px;height:23px;border-bottom:1px solid #d6d6d6;display:flex;align-items:center}b{color:#444;font-weight:700}u{color:#3568a0;text-decoration:underline;text-underline-offset:1px}.tools{display:flex;margin-left:auto}.det{width:700px;height:17px;border-bottom:1px solid #d9d9d9;margin-top:14px;display:flex;align-items:center;font-size:10.500px;color:#555;gap:4px}.stats{display:flex;align-items:center;margin:10px 0 0 2px;height:14px}.name{margin-top:7px;line-height:12px}.dates{display:flex;margin-top:8px;line-height:12px}.dates fit-text{margin-right:6px}',
 `<div class="head"><fit-text w="50"><b>Dash Board</b></fit-text><fit-text w="9" style="margin:0 2.500px 0 3px">by</fit-text><fit-text w="48"><u>Muthumari J</u></fit-text><div class="tools"><ui-icon n="note" s="10" cell="23"></ui-icon><ui-icon n="star2" s="11" cell="23"></ui-icon><ui-icon n="sharenet" s="10" cell="23"></ui-icon><ui-icon n="dl" s="10" cell="23"></ui-icon><ui-icon n="badge" s="11" cell="23"></ui-icon><ui-icon n="gear" s="10" cell="23"></ui-icon></div></div>
 <viz-dashboard></viz-dashboard>
 <div class="det"><fit-text w="33">Details</fit-text><ui-icon n="pencil" s="8" cell="10"></ui-icon></div>
 <div class="stats"><ui-icon n="star2" s="12"></ui-icon><fit-text w="5" style="margin-left:1px">0</fit-text><ui-icon n="eye" s="12" h="10" cell="12" style="margin:0 2px 0 8px"></ui-icon><fit-text w="4.500">8</fit-text></div>
 <div class="name"><fit-text w="42">Dash Board</fit-text></div>
 <div class="dates"><fit-text w="39"><b>Published:</b></fit-text><fit-text w="44">12 Oct 2023</fit-text><fit-text w="35" style="margin-left:10px"><b>Updated:</b></fit-text><fit-text w="44">12 Oct 2023</fit-text></div>`);

define('site-footer',':host{display:flex;height:33px;background:#1b1b1b;padding:16px 18px 0 16px;font-family:Roboto,sans-serif;font-size:8.500px;line-height:15px;color:#b0b0b0}.lang{width:80px;height:16px;background:#333;padding:0 6px 0 7px;display:flex;justify-content:space-between;font-size:8.500px}.lang ui-icon{align-self:center}nav{display:flex;gap:15.600px;margin-left:15.500px}.soc{margin-left:auto;display:flex;gap:14px;height:14px}',
 `<div class="lang"><fit-text w="40">English (UK)</fit-text><ui-icon n="tri" s="6" h="5" cell="4"></ui-icon></div><nav><fit-text w="47">System Status</fit-text><fit-text w="15">Blog</fit-text><fit-text w="17">FAQs</fit-text><fit-text w="20">About</fit-text><fit-text w="55">Tableau Products</fit-text><fit-text w="25">Careers</fit-text><fit-text w="36">Contact Us</fit-text></nav><div class="soc"><ui-icon n="li" s="12"></ui-icon><ui-icon n="fb" s="12" cell="12"></ui-icon><ui-icon n="tw" s="12" cell="12"></ui-icon></div>`);

define('page-scrollbar',':host{display:flex;flex-direction:column;width:17px;height:651px;background:#f1f1f1;align-items:center;justify-content:space-between}i{width:0;height:0;border:4px solid transparent}.u{border-bottom-color:#a3a3a3;border-top:0;margin:7px 0 6px}.d{border-top-color:#505050;border-bottom:0;margin:0 0 7px}.t{width:13px;height:579px;background:#c1c1c1;margin-bottom:auto}',
 '<i class="u"></i><div class="t"></div><i class="d"></i>');

define('task-bar',':host{display:flex;height:40px;background:linear-gradient(90deg,#421d2b 0,#3d1d2a 375px,#3a2530 395px,#31393f 420px,#323d46 485px,#2a3346 600px,#272f41 660px,#253044 710px,#42373b 735px,#4e3a3d 790px,#41363c 835px,#33333b 870px,#342b36 930px,#3c1e2b 960px,#421d2b 1030px);color:#fff;font:12px/18px "Open Sans",sans-serif}.cell{width:49px;display:flex;justify-content:center}.on{border-bottom:2px solid #f786b5;padding-top:2px}.edge{width:40px;margin:0 4.500px}.fold{width:40px;margin:0 4.500px;border-image:linear-gradient(90deg,#f786b5 31px,#a8577f 31px,#c4659a 40px) 2}.act{background:#6b5f62;width:48px}.apps{display:flex;margin-left:344px}.tray{display:flex;margin-left:auto;align-items:center;padding-right:4px}.clock{width:58px;margin-left:13px;display:flex;flex-direction:column;align-items:center;padding-bottom:1px}.end{height:40px;width:1px;background:#9b8790;margin-left:2px}',
 `<ui-icon n="win" cell="48"></ui-icon><div class="apps"><div class="cell"><ui-icon n="ring" s="18"></ui-icon></div><div class="cell"><ui-icon n="task" s="17" h="16" style="margin-right:3px"></ui-icon></div><div class="cell on edge"><ui-icon n="edge" s="24"></ui-icon></div><div class="cell on fold"><ui-icon n="folder" s="22" h="21"></ui-icon></div><div class="cell"><ui-icon n="store" s="24" h="23"></ui-icon></div><div class="cell"><ui-icon n="mail" s="24" h="20"></ui-icon></div><div class="cell"><ui-icon n="vlc" s="20" h="23"></ui-icon></div><div class="cell on act"><ui-icon n="chrome" s="24"></ui-icon></div></div>
 <div class="tray"><ui-icon n="up" s="13" cell="24"></ui-icon><ui-icon n="batt" s="16" cell="24"></ui-icon><ui-icon n="wifi" s="14" cell="24"></ui-icon><ui-icon n="sync" s="17" cell="24"></ui-icon><ui-icon n="vol" s="17" cell="24"></ui-icon><fit-text w="23" style="margin-left:6px">ENG</fit-text><div class="clock"><fit-text w="27">12:40</fit-text><fit-text w="58">13-10-2023</fit-text></div><ui-icon n="action" s="17" cell="52"></ui-icon><div class="end"></div></div>`);

define('desktop-screen',':host{display:block;width:1366px;height:768px}.view{display:flex;height:651px}main{width:1349px}site-footer,viz-page{box-sizing:border-box}',
 '<browser-chrome></browser-chrome><div class="view"><main><site-header></site-header><viz-page></viz-page><site-footer></site-footer></main><page-scrollbar></page-scrollbar></div><task-bar></task-bar>');
</script>
</body>
</html>
